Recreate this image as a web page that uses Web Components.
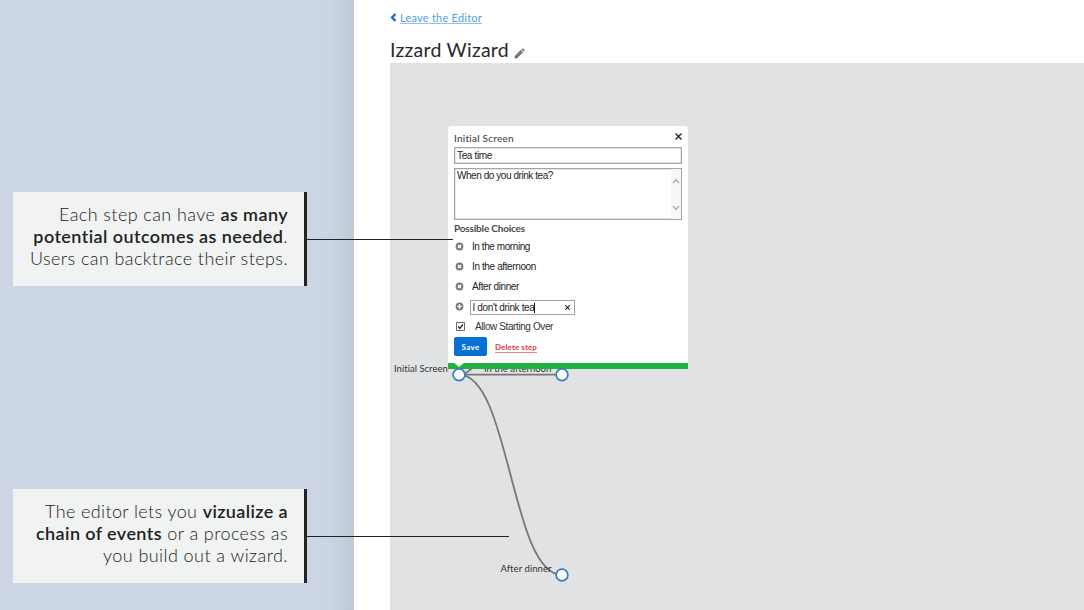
<!DOCTYPE html>
<html lang="en">
<head>
<meta charset="utf-8">
<title>Izzard Wizard</title>
<style>
html,body{margin:0;height:100%;overflow:hidden;background:#fff}
body{font-family:Lato,"Noto Sans",sans-serif;color:#222}
</style>
</head>
<body>
<wizard-page></wizard-page>
<script>
const define=(name,html,ready)=>customElements.define(name,class extends HTMLElement{
  connectedCallback(){
    if(this.shadowRoot)return;
    const t=document.createElement('template');t.innerHTML=html;
    this.attachShadow({mode:'open'}).append(t.content.cloneNode(true));
    if(ready)ready(this,this.shadowRoot);
  }
});

/* A single line of text, tracked so that it spans the width in its "w" attribute. */
define('fit-line',`<style>:host{display:block;white-space:nowrap}span{display:inline-block}</style><span><slot></slot></span>`,(el,root)=>{
  const s=root.querySelector('span'),want=+el.getAttribute('w');
  s.style.letterSpacing='0px';
  const n=el.textContent.length;
  s.style.letterSpacing=((want-s.getBoundingClientRect().width)/n)+'px';
});

define('call-out',`<style>
:host{display:flex;position:relative;box-sizing:border-box;width:294px;height:94px;background:#f0f3f2;border-right:3px solid #222;padding:11px 16px 0 0;flex-direction:column;align-items:flex-end;font-size:18px;line-height:22px;font-weight:300;color:#222}
i{position:absolute;left:294px;top:47px;height:1px;background:#222;z-index:5}
</style><slot></slot><i></i>`,(el,root)=>{root.querySelector('i').style.width=el.getAttribute('reach')+'px'});

define('side-notes',`<style>
:host{display:flex;flex-direction:column;justify-content:space-between;box-sizing:border-box;width:354px;height:610px;padding:192px 0 27px 13px;background:linear-gradient(90deg,#cbd5e4 0,#cbd5e4 326px,#c7d1df 338px,#bec8d3 354px);position:relative;z-index:2}
b{font-weight:600}
</style>
<call-out reach="146"><fit-line w="229">Each step can have <b>as many</b></fit-line><fit-line w="255"><b>potential outcomes as needed</b>.</fit-line><fit-line w="258">Users can backtrace their steps.</fit-line></call-out>
<call-out reach="202"><fit-line w="243">The editor lets you <b>vizualize a</b></fit-line><fit-line w="252"><b>chain of events</b> or a process as</fit-line><fit-line w="185">you build out a wizard.</fit-line></call-out>`);

define('page-head',`<style>
:host{display:flex;flex-direction:column;height:63px;box-sizing:border-box;padding-top:9px}
.back{display:flex;align-items:center;height:17px;gap:3px;color:#4f9fe3;font-size:11px;line-height:14px}
.back svg{width:7px;height:9px}
.back fit-line{border-bottom:1px solid #91c2ec;height:12px;line-height:13px}
.title{display:flex;align-items:center;margin-top:12px;height:24px;font-size:19.5px;line-height:24px;color:#292929;gap:5px}
.title svg{width:11px;height:11px;margin-top:6px}
</style>
<div class="back"><svg viewBox="0 0 7 9"><path d="M5.5 1 2 4.5 5.5 8" fill="none" stroke="#1167cf" stroke-width="2.2"/></svg><fit-line w="82">Leave the Editor</fit-line></div>
<div class="title"><fit-line w="119">Izzard Wizard</fit-line><svg viewBox="0 0 11 11"><path d="M.4 10.6 1 7.8 6.7 2.1 8.9 4.3 3.2 10Z" fill="#666"/><path d="M7.3 1.5 8.2.6Q8.8.2 9.4.7L10.3 1.6Q10.8 2.2 10.3 2.8L9.5 3.7Z" fill="#777"/><path d="m2.5 8 4.7-4.7" stroke="#aaa" stroke-width=".6"/></svg></div>`);

define('choice-row',`<style>
:host{display:flex;align-items:center;height:20px;font:10px/12px "Liberation Sans",Arial,sans-serif;color:#222}
svg{width:9px;height:9px;margin:-1px 8px 0 1px}
:host([edit]) svg{margin-right:6px}
</style><svg viewBox="0 0 9 9"><circle cx="4.5" cy="4.5" r="3.9" fill="#7a7a7a"/><path class="x" d="M3 3 6 6M6 3 3 6" stroke="#fff" stroke-width="1.4"/></svg><slot></slot>`,(el,root)=>{
  if(el.hasAttribute('edit'))root.querySelector('.x').setAttribute('d','M4.5 2.3V6.7M2.3 4.5H6.7');
});

define('step-panel',`<style>
:host{display:flex;flex-direction:column;box-sizing:border-box;width:240px;height:243px;padding:0 6px;background:#fff;border-bottom:6px solid #22b140;border-radius:3px 3px 0 0;font:10px/12px "Liberation Sans",Arial,sans-serif;color:#222}
.head{display:flex;justify-content:space-between;align-items:center;height:21px;padding-top:3px;box-sizing:border-box;font:500 10px/13px Lato,sans-serif;color:#444}
.head svg{width:7px;height:7px;margin-top:-4px}
.field,.area,.edit{box-sizing:border-box;border:1px solid #a5a5a5;background:#fff}
.field{height:17px;padding:2px;box-shadow:inset 0 0 0 .5px #ccc}
.area{height:52px;margin-top:4px;display:flex;justify-content:space-between;padding:1px 0 0 2px;box-shadow:inset 0 0 0 .5px #ccc}
.bar{width:10px;margin-top:-1px;background:#f7f7f7;display:flex;flex-direction:column;justify-content:space-between;padding:9px 0 8px;box-sizing:border-box}
.bar svg{width:8px;height:6px;margin-left:1px}
h4{margin:0;height:17px;padding-top:2px;box-sizing:border-box;font:700 10px/13px Lato,sans-serif;color:#484848}
.edit{display:flex;align-items:center;width:105px;height:15px;padding:1px 4px 0 2px}
.edit fit-line{margin-left:-.5px}
.caret{width:1px;height:10px;background:#111;flex:none}
.edit svg{width:5px;height:5px;margin:0 0 0 auto}
.check{display:flex;align-items:center;height:19px;gap:10px;color:#333}
.check svg{width:9px;height:9px;margin-left:2px}
.acts{display:flex;align-items:center;height:19px;margin-top:1px;gap:8px;font:700 8px/11px Lato,sans-serif}
.save{display:flex;align-items:center;justify-content:center;width:33px;height:19px;padding-top:1px;box-sizing:border-box;border-radius:2px;background:#0670d5;color:#fff}
.del{color:#e33b40;border-bottom:1px solid #ee8588;height:10px;margin-top:1px}
.tip{position:absolute;left:5px;top:236px;width:12px;height:5px}
</style>
<div class="head"><fit-line w="60">Initial Screen</fit-line><svg viewBox="0 0 7 7"><path d="M.5.5 6.5 6.5M6.5.5.5 6.5" stroke="#222" stroke-width="1.4"/></svg></div>
<div class="field"><fit-line w="35">Tea time</fit-line></div>
<div class="area"><fit-line w="96">When do you drink tea?</fit-line><div class="bar"><svg viewBox="0 0 8 6"><path d="M1 5 4 1.5 7 5" fill="none" stroke="#aaa" stroke-width="1.3"/></svg><svg viewBox="0 0 8 6"><path d="M1 1 4 4.5 7 1" fill="none" stroke="#aaa" stroke-width="1.3"/></svg></div></div>
<h4><fit-line w="71">Possible Choices</fit-line></h4>
<choice-row><fit-line w="58">In the morning</fit-line></choice-row>
<choice-row><fit-line w="64">In the afternoon</fit-line></choice-row>
<choice-row><fit-line w="47">After dinner</fit-line></choice-row>
<choice-row edit><div class="edit"><fit-line w="62">I don't drink tea</fit-line><span class="caret"></span><svg viewBox="0 0 5 5"><path d="M.3.3 4.7 4.7M4.7.3.3 4.7" stroke="#222" stroke-width="1.1"/></svg></div></choice-row>
<div class="check"><svg viewBox="0 0 9 9"><path d="M.5.5h8v8h-8z" fill="#fff" stroke="#666"/><path d="M2 4.4 3.8 6.4 7 2.3" fill="none" stroke="#222" stroke-width="1.3"/></svg><fit-line w="78">Allow Starting Over</fit-line></div>
<div class="acts"><span class="save"><fit-line w="18">Save</fit-line></span><span class="del"><fit-line w="42">Delete step</fit-line></span></div>
<svg class="tip" viewBox="0 0 12 5"><path d="M0 0H12L6 5Z" fill="#fff"/></svg>`);

define('flow-canvas',`<style>
:host{display:block;position:relative;height:547px;margin-left:.4px;background:#e1e2e4;overflow:hidden;font-size:9.5px;line-height:12px;color:#333}
svg.g{position:absolute;left:-.4px;top:0;width:694px;height:547px}
fit-line,step-panel{position:absolute}
step-panel{left:57.6px;top:63px}
svg.n{z-index:3}
</style>
<svg class="g" viewBox="390 63 694 547"><g fill="none" stroke="#777" stroke-width="1.8"><path d="M459 374.7H562"/><path d="M459 374.7C510 374.7 511 575 562 575"/><path d="M459 375C467 375 474 366 480 360"/></g></svg>
<fit-line w="54" style="left:3.6px;top:300px">Initial Screen</fit-line>
<fit-line w="67" style="left:93.6px;top:300px">In the afternoon</fit-line>
<fit-line w="51" style="left:110px;top:500px">After dinner</fit-line>
<step-panel></step-panel>
<svg class="g n" viewBox="390 63 694 547"><g fill="#fff" stroke="#377dbd" stroke-width="1.7"><circle cx="459" cy="374.7" r="5.9"/><circle cx="562" cy="374.7" r="5.9"/><circle cx="562" cy="575" r="5.9"/></g></svg>`);

define('wizard-page',`<style>
:host{display:grid;grid-template-columns:354px 1fr;width:1084px;height:610px;overflow:hidden}
main{padding-left:36px;min-width:0;background:#fff}
</style><side-notes></side-notes><main><page-head></page-head><flow-canvas></flow-canvas></main>`);
</script>
</body>
</html>
